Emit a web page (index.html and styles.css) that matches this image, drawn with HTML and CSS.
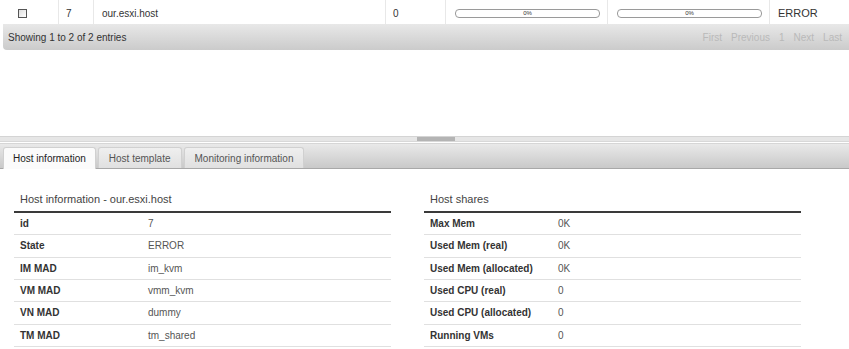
FILE: index.html
```html
<!DOCTYPE html>
<html lang="en">
<head>
    <meta charset="UTF-8">
    <title>Hosts - our.esxi.host</title>
    <link rel="stylesheet" href="styles.css">
</head>
<body>
    <div class="datatable">
        <table class="hosts">
            <tr>
                <td class="col-check"><span class="checkbox"></span></td>
                <td class="col-id">7</td>
                <td class="col-name">our.esxi.host</td>
                <td class="col-vms">0</td>
                <td class="col-bar"><div class="ratio"><span>0%</span></div></td>
                <td class="col-bar"><div class="ratio"><span>0%</span></div></td>
                <td class="col-state">ERROR</td>
            </tr>
        </table>
        <div class="table-footer">
            <div class="info">Showing 1 to 2 of 2 entries</div>
            <div class="paging">
                <span>First</span>
                <span>Previous</span>
                <span>1</span>
                <span>Next</span>
                <span>Last</span>
            </div>
        </div>
    </div>

    <div class="splitter"><div class="grip"></div></div>

    <div class="tabs">
        <div class="tab active">Host information</div>
        <div class="tab">Host template</div>
        <div class="tab">Monitoring information</div>
    </div>

    <div class="tab-content">
        <div class="panel">
            <div class="panel-title">Host information - our.esxi.host</div>
            <table class="info-table">
                <tr><td class="key">id</td><td class="value">7</td></tr>
                <tr><td class="key">State</td><td class="value">ERROR</td></tr>
                <tr><td class="key">IM MAD</td><td class="value">im_kvm</td></tr>
                <tr><td class="key">VM MAD</td><td class="value">vmm_kvm</td></tr>
                <tr><td class="key">VN MAD</td><td class="value">dummy</td></tr>
                <tr><td class="key">TM MAD</td><td class="value">tm_shared</td></tr>
            </table>
        </div>
        <div class="panel">
            <div class="panel-title">Host shares</div>
            <table class="info-table">
                <tr><td class="key">Max Mem</td><td class="value">0K</td></tr>
                <tr><td class="key">Used Mem (real)</td><td class="value">0K</td></tr>
                <tr><td class="key">Used Mem (allocated)</td><td class="value">0K</td></tr>
                <tr><td class="key">Used CPU (real)</td><td class="value">0</td></tr>
                <tr><td class="key">Used CPU (allocated)</td><td class="value">0</td></tr>
                <tr><td class="key">Running VMs</td><td class="value">0</td></tr>
            </table>
        </div>
    </div>
</body>
</html>
```

FILE: styles.css
```css
body {
    margin: 0;
    font-family: 'Liberation Sans', Arial, sans-serif;
    font-size: 10px;
    color: #333;
    background-color: #fff;
}

/* hosts list */
.datatable {
    margin-left: 3px;
}

.hosts {
    width: 846px;
    table-layout: fixed;
    border-collapse: separate;
    border-spacing: 0;
}

.hosts td {
    box-sizing: border-box;
    height: 24px;
    padding: 2px 0 0 7px;
    border-right: 1px solid #e8e8e8;
    vertical-align: middle;
    white-space: nowrap;
}

.hosts td.col-check { width: 56px; padding-left: 15px; }
.hosts td.col-id { width: 35px; }
.hosts td.col-name { width: 292px; padding-left: 8px; }
.hosts td.col-vms { width: 60px; }
.hosts td.col-bar { width: 162px; padding-left: 9px; }
.hosts td.col-state { border-right: none; padding-left: 8px; font-size: 11px; }

.checkbox {
    display: block;
    width: 7px;
    height: 7px;
    border: 1px solid #555;
    background: linear-gradient(135deg, #dcdcdc, #fff);
}

.ratio {
    box-sizing: border-box;
    width: 145px;
    height: 9px;
    border: 1px solid #9a9a9a;
    border-radius: 4px;
    background-color: #fff;
    text-align: center;
}

.ratio span {
    display: block;
    font-size: 6px;
    line-height: 7px;
    color: #333;
}

.table-footer {
    display: flex;
    justify-content: space-between;
    align-items: center;
    height: 26px;
    padding-left: 5px;
    border-bottom-left-radius: 4px;
    background: linear-gradient(#e8e8e8, #cbcbcb);
}

.paging {
    display: flex;
    gap: 9px;
    padding-right: 7px;
    color: #b9b9b9;
}

/* resize handle between the list and the details */
.splitter {
    margin-top: 86px;
    height: 4px;
    border-top: 1px solid #d4d4d4;
    border-bottom: 1px solid #d8d8d8;
    background-color: #e6e6e6;
}

.grip {
    width: 38px;
    height: 4px;
    margin-left: 417px;
    background-color: #b4b4b4;
}

.tabs {
    display: flex;
    align-items: flex-end;
    height: 24px;
    margin-top: 1px;
    padding-left: 3px;
    border-top: 1px solid #d6d6d6;
    border-bottom: 1px solid #a8a8a8;
    background: linear-gradient(#e9e9e9, #c9c9c9);
}

.tab {
    height: 20px;
    line-height: 21px;
    padding: 0 10px;
    margin-right: 2px;
    border: 1px solid #d0d0d0;
    border-bottom: none;
    border-radius: 3px 3px 0 0;
    background: linear-gradient(#efefef, #e0e0e0);
    color: #555;
}

.tab.active {
    height: 21px;
    padding: 0 9px;
    margin-bottom: -1px;
    background: #fbfbfb;
    color: #222;
}

/* details */
.tab-content {
    display: flex;
    gap: 33px;
    padding: 22px 0 0 14px;
}

.panel {
    width: 377px;
}

.panel-title {
    font-size: 11px;
    line-height: 16px;
    padding-left: 6px;
    margin-bottom: 4px;
    color: #444;
}

.info-table {
    width: 100%;
    border-collapse: separate;
    border-spacing: 0;
    border-top: 2px solid #3a3a3a;
}

.info-table td {
    height: 21.33px;
    padding: 0;
    border-bottom: 1px solid #e0e0e0;
    vertical-align: middle;
}

.info-table td.key {
    box-sizing: border-box;
    width: 134px;
    padding-left: 6px;
    font-weight: bold;
    color: #333;
}

.info-table td.value {
    color: #555;
}
```
